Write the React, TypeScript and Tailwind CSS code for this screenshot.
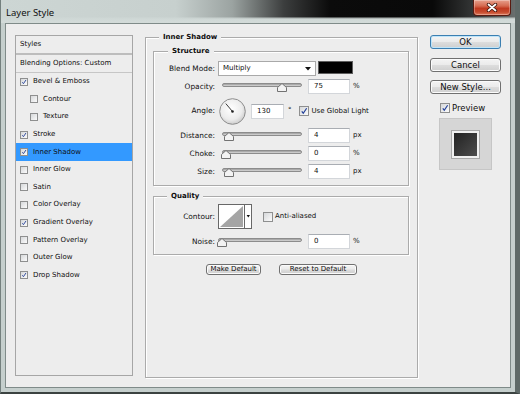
import React from "react";

type StyleItem = { label: string; checked?: boolean; sub?: boolean; active?: boolean };

const styleItems: StyleItem[] = [
  { label: "Bevel & Emboss", checked: true },
  { label: "Contour", sub: true },
  { label: "Texture", sub: true },
  { label: "Stroke", checked: true },
  { label: "Inner Shadow", checked: true, active: true },
  { label: "Inner Glow" },
  { label: "Satin" },
  { label: "Color Overlay" },
  { label: "Gradient Overlay", checked: true },
  { label: "Pattern Overlay" },
  { label: "Outer Glow" },
  { label: "Drop Shadow", checked: true },
];

function Checkbox({ checked, big }: { checked?: boolean; big?: boolean }) {
  return (
    <span
      className={`flex shrink-0 items-center justify-center border border-[#8e8f8f] bg-[linear-gradient(135deg,#d6d8da,#fbfbfb)] ${
        big ? "w-[10px] h-[10px]" : "w-[8px] h-[8px]"
      }`}
    >
      {checked && (
        <svg viewBox="0 0 10 10" className="w-full h-full">
          <path d="M2.2 5.4 L4.1 7.8 L8.3 1.6" fill="none" stroke="#22409a" strokeWidth="1.5" />
        </svg>
      )}
    </span>
  );
}

function Field({ value, className }: { value: string; className: string }) {
  return (
    <div
      className={`h-[15px] shrink-0 flex items-center pl-[5px] bg-white border border-[#d3d6da] border-t-[#a9adb3] ${className}`}
    >
      {value}
    </div>
  );
}

function Slider({ value, wide }: { value: number; wide?: boolean }) {
  return (
    <div className={`relative h-full shrink-0 ${wide ? "ml-[-1px] w-[88px]" : "ml-[3px] w-[84px]"}`}>
      <div
        className={`ml-[4px] mt-[4px] h-[4px] rounded-full border border-[#8c8c8c] bg-[linear-gradient(to_bottom,#9a9a9a,#dadada)] ${
          wide ? "w-[84px]" : "w-[80px]"
        }`}
      />
      <svg
        className="absolute top-[4px]"
        style={{ left: 3 + value * 0.75 }}
        width="10"
        height="9"
        viewBox="0 0 10 9"
      >
        <path d="M5 0.5 L9.5 4.5 V8.5 H0.5 V4.5 Z" fill="#f3f3f3" stroke="#727272" />
      </svg>
    </div>
  );
}

function Label({ children }: { children: React.ReactNode }) {
  return <span className="w-[61px] shrink-0 text-right text-[7.4px]">{children}</span>;
}

function SliderRow({ label, value, unit, wide }: { label: string; value: number; unit: string; wide?: boolean }) {
  return (
    <div className="flex h-[15px] items-center">
      <Label>{label}</Label>
      <Slider value={value} wide={wide} />
      <Field value={String(value)} className="ml-[6px] w-[42px]" />
      <span className="ml-[3px]">{unit}</span>
    </div>
  );
}

function Button({ children, primary, className = "" }: { children: React.ReactNode; primary?: boolean; className?: string }) {
  return (
    <div
      className={`flex items-center justify-center rounded-[3px] border bg-[linear-gradient(to_bottom,#f4f4f4_0%,#ebebeb_48%,#dddddd_52%,#cfcfcf_100%)] ${
        primary
          ? "border-[#3c7fb1] shadow-[inset_0_0_0_1px_#bfe5fa]"
          : "border-[#707070] shadow-[inset_0_0_0_1px_#fbfbfb]"
      } ${className}`}
    >
      {children}
    </div>
  );
}

function Dial() {
  return (
    <svg width="27" height="27" viewBox="0 0 27 27" className="ml-[4px] shrink-0">
      <defs>
        <radialGradient id="dial" cx="45%" cy="40%" r="60%">
          <stop offset="0%" stopColor="#ffffff" />
          <stop offset="70%" stopColor="#ececec" />
          <stop offset="100%" stopColor="#cdcdcd" />
        </radialGradient>
      </defs>
      <circle cx="13.5" cy="13.5" r="12.8" fill="url(#dial)" stroke="#8d8d8d" />
      <line x1="13.5" y1="13.5" x2="6.8" y2="5.6" stroke="#3a3a3a" strokeWidth="1" />
      <circle cx="13.5" cy="13.5" r="1.3" fill="#222" />
    </svg>
  );
}

export default function App() {
  return (
    <div className="w-[520px] h-[394px] flex flex-col overflow-hidden border-l border-r-[5px] border-b-[2px] border-l-[#74807e] border-r-[#5f6a68] border-b-[#3b4341] bg-[#c5cfcd] font-['DejaVu_Sans',sans-serif] text-[7px] leading-none text-[#0e0e0e]">
      {/* title bar */}
      <div className="h-[23px] shrink-0 flex items-start [background-image:linear-gradient(to_bottom,rgba(208,217,215,0)_0%,rgba(208,217,215,0)_72%,#cfd8d6_82%,#d3dbd9_100%),linear-gradient(to_right,#cdd6d4_0%,#c7d0ce_34%,#9ba3a1_45%,#3c3e3e_55%,#0b0b0b_64%,#090909_84%,#3a3c3c_93%,#6a6f6e_100%)]">
        <span className="ml-[5px] mt-[6px] font-['Noto_Sans',sans-serif] text-[9.5px] leading-[13px] text-[#111]">
          Layer Style
        </span>
        <div className="ml-auto mr-[4px] w-[38px] h-[16px] flex items-center justify-center rounded-b-[4px] border border-t-0 border-[#5a1b10] bg-[linear-gradient(to_bottom,#e7a08c_0%,#d56a50_40%,#c0391f_56%,#c64a2d_80%,#de7a5a_100%)] shadow-[inset_0_0_0_1px_rgba(255,255,255,0.3)]">
          <svg width="12" height="9" viewBox="0 0 12 9">
            <path d="M2.5 1.5 L9.5 7.5 M9.5 1.5 L2.5 7.5" stroke="#3b1208" strokeWidth="3.4" strokeLinecap="round" />
            <path d="M2.5 1.5 L9.5 7.5 M9.5 1.5 L2.5 7.5" stroke="#fff" strokeWidth="1.8" strokeLinecap="round" />
          </svg>
        </div>
      </div>

      {/* frame + client */}
      <div className="flex-1 flex px-[4px] pb-[4px]">
        <div className="flex-1 flex items-start border border-[#7f8b89] bg-[#ededed]">
          {/* styles list */}
          <div className="ml-[9px] mt-[11px] w-[118px] h-[341px] shrink-0 border border-[#a6a6a6]">
            <div className="h-[17px] flex items-center pl-[4px]">Styles</div>
            <div className="h-[2px] bg-[#bdbdbd]" />
            <div className="h-[17px] flex items-center pl-[4px]">Blending Options: Custom</div>
            <div className="h-[1px] bg-[#c6c6c6]" />
            {styleItems.map((item) => (
              <div
                key={item.label}
                className={`h-[17.6px] flex items-center ${item.sub ? "pl-[14px]" : "pl-[4px]"} ${
                  item.active ? "bg-[#3399ff]" : ""
                }`}
              >
                <Checkbox checked={item.checked} />
                <span className="ml-[5px]">{item.label}</span>
              </div>
            ))}
          </div>

          {/* settings */}
          <fieldset className="ml-[12px] mt-[8px] w-[273px] h-[346px] shrink-0 border border-[#ababab] shadow-[inset_1px_1px_0_#fff,1px_1px_0_#fff]">
            <legend className="ml-[13px] px-[4px] bg-[#ededed] font-bold leading-[10px]">Inner Shadow</legend>

            <fieldset className="ml-[7px] mt-[4px] w-[256px] pt-[5px] pb-[6px] border border-[#ababab] shadow-[inset_1px_1px_0_#fff,1px_1px_0_#fff]">
              <legend className="ml-[14px] px-[4px] bg-[#ededed] font-bold leading-[10px]">Structure</legend>
              <div className="flex flex-col gap-[3px]">
                <div className="flex h-[15px] items-center">
                  <Label>Blend Mode:</Label>
                  <div className="ml-[3px] w-[98px] h-[15px] shrink-0 flex items-center justify-between pl-[4px] pr-[4px] bg-white border border-[#a9a9a9]">
                    <span>Multiply</span>
                    <svg width="6" height="4" viewBox="0 0 6 4">
                      <path d="M0 0 H6 L3 3.5 Z" fill="#111" />
                    </svg>
                  </div>
                  <div className="ml-[2px] w-[35px] h-[13px] self-start shrink-0 bg-black border border-[#5e5e5e]" />
                </div>
                <SliderRow label="Opacity:" value={75} unit="%" />
                <div className="flex h-[28px] items-center">
                  <Label>Angle:</Label>
                  <Dial />
                  <Field value="130" className="ml-[5px] w-[33px]" />
                  <span className="ml-[4px] self-start mt-[10px]">°</span>
                  <span className="ml-[7px]">
                    <Checkbox big checked />
                  </span>
                  <span className="ml-[3px]">Use Global Light</span>
                </div>
                <SliderRow label="Distance:" value={4} unit="px" />
                <SliderRow label="Choke:" value={0} unit="%" />
                <SliderRow label="Size:" value={4} unit="px" />
              </div>
            </fieldset>

            <fieldset className="ml-[7px] mt-[5px] w-[256px] pt-[3px] pb-[5px] border border-[#ababab] shadow-[inset_1px_1px_0_#fff,1px_1px_0_#fff]">
              <legend className="ml-[13px] px-[4px] bg-[#ededed] font-bold leading-[10px]">Quality</legend>
              <div className="flex flex-col gap-[5px]">
                <div className="flex h-[25px] items-center">
                  <Label>Contour:</Label>
                  <svg width="34" height="25" viewBox="0 0 34 25" className="ml-[3px] shrink-0">
                    <rect x="0.5" y="0.5" width="33" height="24" fill="#fff" stroke="#686868" />
                    <path d="M2 23 L25 2 L25 23 Z" fill="#a5a5a5" />
                    <line x1="26.5" y1="1" x2="26.5" y2="24" stroke="#686868" />
                    <path d="M28.6 11 H32 L30.3 13.6 Z" fill="#111" />
                  </svg>
                  <span className="ml-[11px]">
                    <Checkbox big />
                  </span>
                  <span className="ml-[2px]">Anti-aliased</span>
                </div>
                <SliderRow label="Noise:" value={0} unit="%" wide />
              </div>
            </fieldset>

            <div className="mt-[9px] flex justify-center gap-[18px]">
              <Button className="w-[55px] h-[11px]">Make Default</Button>
              <Button className="w-[78px] h-[11px]">Reset to Default</Button>
            </div>
          </fieldset>

          {/* buttons + preview */}
          <div className="ml-[12px] mt-[11px] w-[71px] shrink-0 flex flex-col items-center text-[8.5px]">
            <Button primary className="w-full h-[14px]">OK</Button>
            <Button className="mt-[9px] w-full h-[14px]">Cancel</Button>
            <Button className="mt-[8px] w-full h-[14px]">New Style...</Button>
            <div className="mt-[9px] self-start ml-[10px] h-[10px] flex items-center">
              <Checkbox big checked />
              <span className="ml-[2px]">Preview</span>
            </div>
            <div className="mt-[5px] w-[53px] h-[52px] flex items-center justify-center bg-[#d6d6d6] border border-[#c6c6c6]">
              <div className="w-[27px] h-[27px] border-2 border-[#f0f0f0] bg-[linear-gradient(135deg,#222222,#4d4d4d)] shadow-[0_0_0_1px_#a8a8a8]" />
            </div>
          </div>
        </div>
      </div>
    </div>
  );
}
